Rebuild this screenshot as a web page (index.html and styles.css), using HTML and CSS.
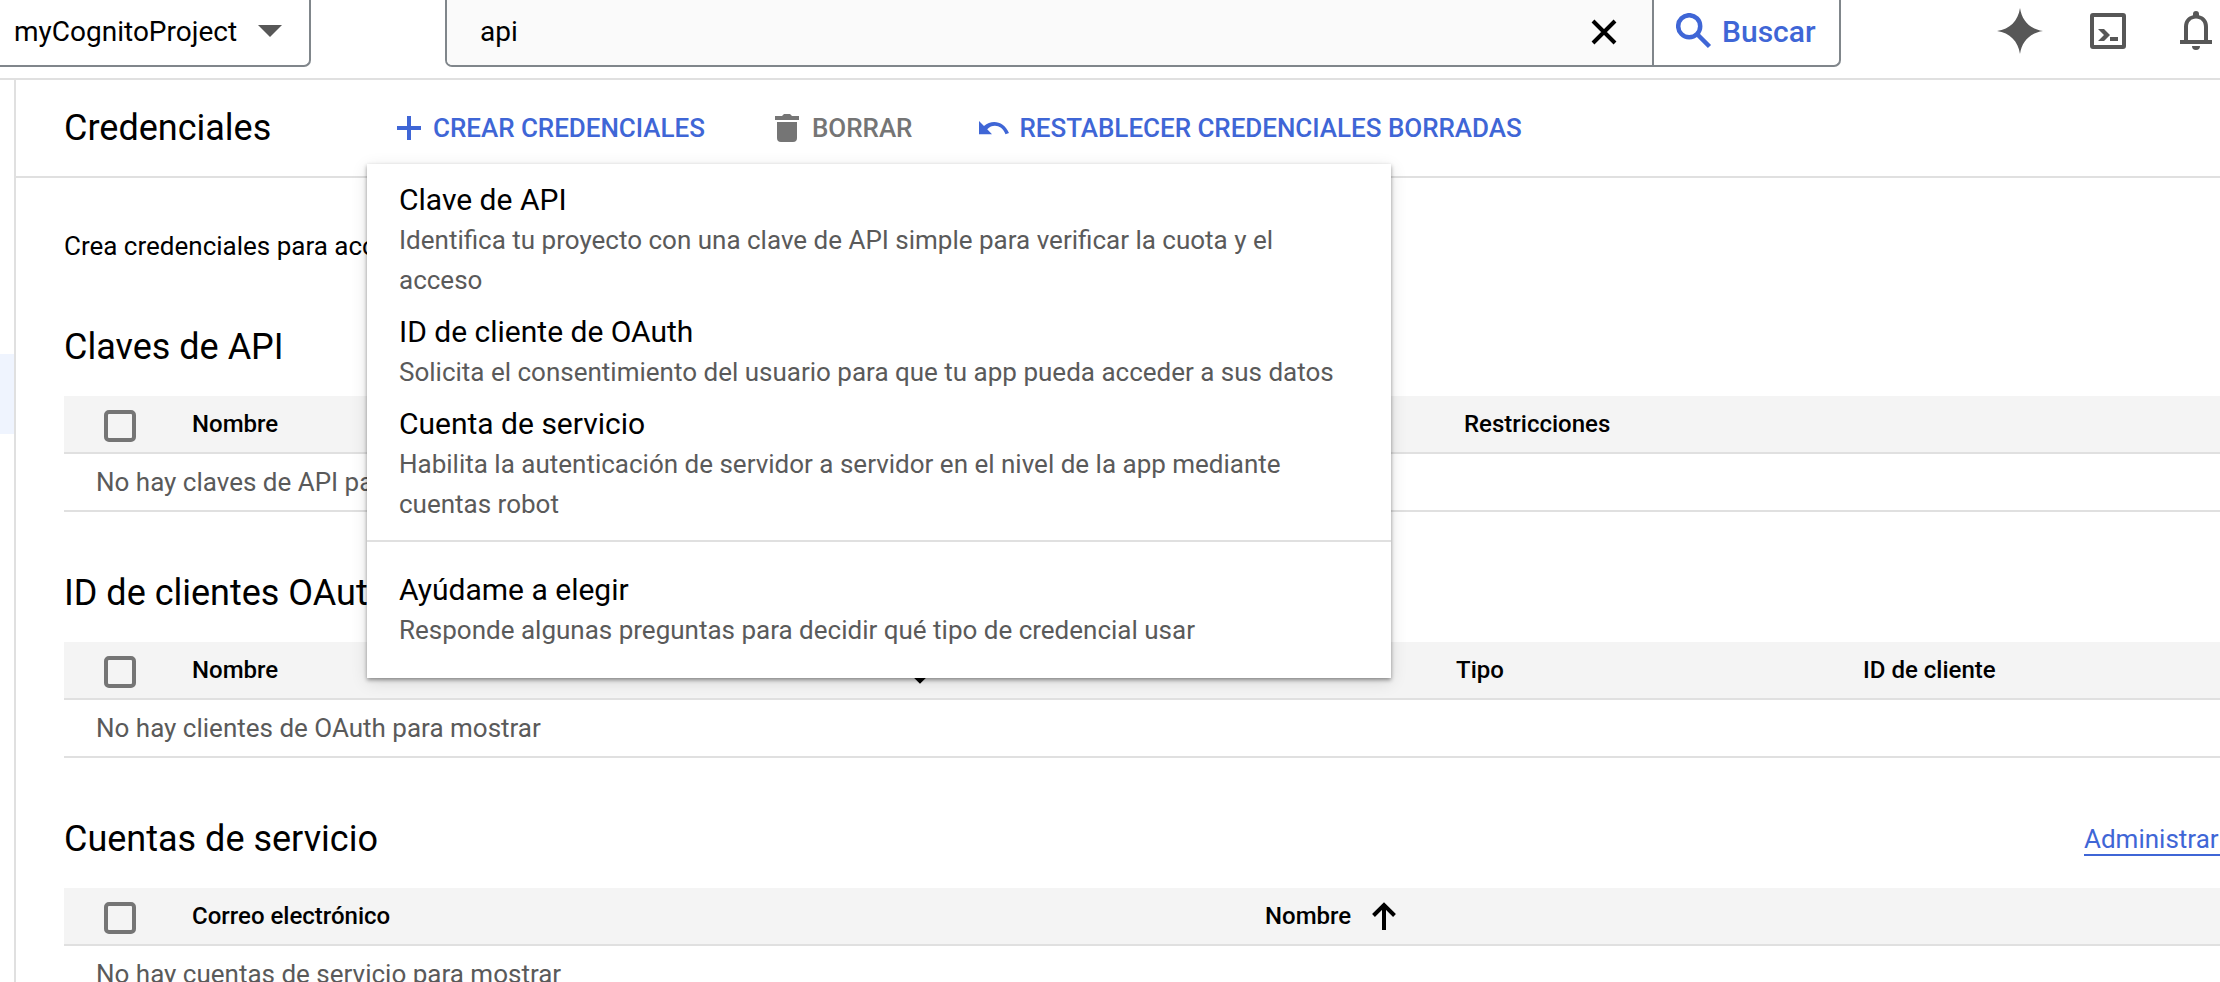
FILE: index.html
```html
<!DOCTYPE html>
<html lang="es">
<head>
<meta charset="utf-8">
<title>Credenciales</title>
<link rel="stylesheet" href="styles.css">
</head>
<body>
<header class="topbar">
  <button class="project">myCognitoProject<span class="caret"></span></button>
  <div class="search">
    <div class="search-field">
      <span>api</span>
      <svg class="clear" viewBox="0 0 26 26"><path d="M2 2 24 24M24 2 2 24"/></svg>
    </div>
    <button class="search-btn">
      <svg class="lens" viewBox="0 0 36 36"><circle cx="13.200" cy="13.200" r="11"/><path d="M21 21 33.500 33.500"/></svg>
      Buscar
    </button>
  </div>
  <div class="tools">
    <svg class="spark" viewBox="0 0 46 46"><path d="M23 0C25 13 33 21 46 23C33 25 25 33 23 46C21 33 13 25 0 23C13 21 21 13 23 0Z"/></svg>
    <svg class="shell" viewBox="0 0 36 36"><path d="M3 0H33a3 3 0 0 1 3 3V33a3 3 0 0 1-3 3H3a3 3 0 0 1-3-3V3a3 3 0 0 1 3-3ZM4 4V32H32V4ZM8 16H14L20 22 14 28H8L14 22ZM20 24H28V28H20Z" fill-rule="evenodd"/></svg>
    <svg class="bell" viewBox="0 0 32 40"><path d="M16 0a3 3 0 0 1 3 3v1.200C25 5.500 28 10 28 16V29H32V33H0V29H4V16C4 10 7 5.500 13 4.200V3a3 3 0 0 1 3-3ZM16 7.500C11 7.500 8 11 8 16V29H24V16C24 11 21 7.500 16 7.500ZM12 35H20a4 4 0 0 1-8 0Z" fill-rule="evenodd"/></svg>
  </div>
</header>
<div class="body">
  <nav class="rail"><div class="rail-active"></div></nav>
  <main class="main">
    <div class="toolbar">
      <h1 class="title">Credenciales</h1>
      <button class="action create"><svg class="plus" viewBox="0 0 24 24"><path d="M10 0H14V10H24V14H14V24H10V14H0V10H10Z"/></svg>CREAR CREDENCIALES</button>
      <button class="action delete"><svg class="trash" viewBox="0 0 24 28"><path d="M7 2 9 0H15L17 2H24V6H0V2ZM2 8H22V24a4 4 0 0 1-4 4H6a4 4 0 0 1-4-4Z"/></svg>BORRAR</button>
      <button class="action restore"><svg class="undo" viewBox="0 0 30 14"><path d="M0 0 5 5C13-2 25 0 30 12L26.500 13.200C23 4 14 2.500 8.200 8.200L13 13.200H0Z"/></svg>RESTABLECER CREDENCIALES BORRADAS</button>
      <div class="menu">
        <div class="item"><div class="name">Clave de API</div><div class="desc">Identifica tu proyecto con una clave de API simple para verificar la cuota y el acceso</div></div>
        <div class="item"><div class="name">ID de cliente de OAuth</div><div class="desc">Solicita el consentimiento del usuario para que tu app pueda acceder a sus datos</div></div>
        <div class="item"><div class="name">Cuenta de servicio</div><div class="desc">Habilita la autenticación de servidor a servidor en el nivel de la app mediante cuentas robot</div></div>
        <div class="item help"><div class="name">Ayúdame a elegir</div><div class="desc">Responde algunas preguntas para decidir qué tipo de credencial usar</div></div>
      </div>
    </div>
    <div class="content">
      <p class="intro">Crea credenciales para acceder a tus API habilitadas.</p>
      <section class="block">
        <div class="head"><h2>Claves de API</h2></div>
        <div class="cols keys"><span class="box"></span><span>Nombre</span><span>Restricciones</span></div>
        <div class="empty">No hay claves de API para mostrar</div>
      </section>
      <section class="block">
        <div class="head"><h2>ID de clientes OAuth 2.0</h2></div>
        <div class="cols clients"><span class="box"></span><span>Nombre</span><span class="sorted">Fecha de creación<svg class="arrow down" viewBox="0 0 24 28"><path d="M12 2V28M1.500 13.500 12 3 22.500 13.500"/></svg></span><span>Tipo</span><span>ID de cliente</span></div>
        <div class="empty">No hay clientes de OAuth para mostrar</div>
      </section>
      <section class="block">
        <div class="head"><h2>Cuentas de servicio</h2><a class="manage">Administrar cuentas de servicio</a></div>
        <div class="cols accounts"><span class="box"></span><span>Correo electrónico</span><span class="sorted">Nombre<svg class="arrow" viewBox="0 0 24 28"><path d="M12 2V28M1.500 13.500 12 3 22.500 13.500"/></svg></span></div>
        <div class="empty">No hay cuentas de servicio para mostrar</div>
      </section>
    </div>
  </main>
</div>
</body>
</html>
```
FILE: styles.css
```css
* { box-sizing: border-box; }
html, body { margin: 0; height: 982px; overflow: hidden; background: #fff; }
body { font-family: Roboto, sans-serif; font-size: 26px; color: #000; display: flex; flex-direction: column; }
button { font: inherit; background: none; border: 0; padding: 0; margin: 0; text-align: left; }
h1, h2, p { margin: 0; font-weight: 400; }
svg { display: block; flex: none; fill: currentColor; }

.topbar { height: 80px; flex: none; display: flex; align-items: flex-start; border-bottom: 2px solid #e0e0e0; }
.project { width: 311px; height: 67px; display: flex; align-items: center; padding: 0 0 3px 14px; border: 2px solid #80868b; border-width: 0 2px 2px 0; border-radius: 0 0 7px 0; font-size: 28px; }
.caret { margin-left: 21px; border: 12px solid transparent; border-top-color: #575757; border-bottom: 0; }
.search { width: 1396px; height: 67px; margin-left: 134px; display: flex; border: 2px solid #80868b; border-top: 0; border-radius: 0 0 7px 7px; overflow: hidden; }
.search-field { flex: 1; display: flex; align-items: center; justify-content: space-between; background: #fafafa; border-right: 2px solid #80868b; padding: 0 35px 3px 33px; font-size: 28px; }
.clear { width: 26px; height: 26px; fill: none; stroke: #000; stroke-width: 4; margin-top: 2px; }
.search-btn { width: 185px; display: flex; align-items: center; gap: 10px; padding: 0 0 3px 22px; color: #3f66d6; font-size: 30px; font-weight: 500; }
.lens { width: 36px; height: 36px; fill: none; stroke: currentColor; stroke-width: 4.500; }
.tools { display: flex; align-items: center; height: 62px; margin-left: 156px; color: #575757; }
.spark { width: 46px; height: 46px; }
.shell { width: 36px; height: 36px; margin-left: 47px; }
.bell { width: 32px; height: 40px; margin-left: 54px; }

.body { flex: 1; display: flex; min-height: 0; overflow: hidden; }
.rail { width: 16px; flex: none; border-right: 2px solid #e0e0e0; padding-top: 274px; }
.rail-active { height: 80px; background: #eff4fe; }
.main { flex: 1; min-width: 0; }
.toolbar { position: relative; height: 98px; display: flex; align-items: center; padding-left: 48px; border-bottom: 2px solid #e0e0e0; }
.title { font-size: 36px; width: 333px; }
.action { display: flex; align-items: center; color: #3f66d6; font-weight: 500; font-size: 26px; letter-spacing: -0.03px; white-space: nowrap; }
.plus { width: 24px; height: 24px; margin-right: 12px; }
.delete { color: #757575; margin-left: 70px; }
.trash { width: 24px; height: 28px; margin-right: 13px; }
.restore { margin-left: 67px; }
.undo { width: 30px; height: 14px; margin-right: 10px; }

.menu { position: absolute; left: 351px; top: 84px; width: 1024px; height: 514px; padding: 16px 0; background: #fff; z-index: 2; box-shadow: 0 2px 4px rgba(0,0,0,.4), 0 4px 16px rgba(0,0,0,.12); }
.item { padding: 0 32px 12px; }
.name { font-size: 30px; line-height: 40px; }
.desc { color: #5a5a5a; line-height: 40px; }
.help { margin-top: 4px; border-top: 2px solid #e0e0e0; padding-top: 28px; }

.content { padding-left: 48px; }
.intro { height: 136px; padding-top: 48px; line-height: 40px; }
.head { height: 82px; display: flex; justify-content: space-between; align-items: flex-start; }
.block { height: 246px; }
.head h2 { font-size: 36px; line-height: 66px; }
.cols { display: grid; align-items: center; height: 58px; padding-left: 40px; background: #f4f4f4; border-bottom: 2px solid #e0e0e0; font-size: 24px; font-weight: 500; }
.keys { grid-template-columns: 88px 1272px 1fr; }
.clients { grid-template-columns: 88px 500px 764px 407px 1fr; }
.accounts { grid-template-columns: 88px 1073px 1fr; }
.box { width: 32px; height: 32px; margin-top: 4px; border: 4px solid #757575; border-radius: 5px; }
.sorted { display: flex; align-items: center; gap: 21px; }
.arrow { width: 24px; height: 28px; fill: none; stroke: #000; stroke-width: 4; }
.down { transform: rotate(180deg); }
.empty { height: 58px; padding-left: 32px; line-height: 57px; color: #5a5a5a; border-bottom: 2px solid #e0e0e0; }
.manage { width: 136px; color: #3f66d6; line-height: 40px; height: 37px; margin-top: 13px; border-bottom: 2px solid #3f66d6; white-space: nowrap; overflow: hidden; }
```
